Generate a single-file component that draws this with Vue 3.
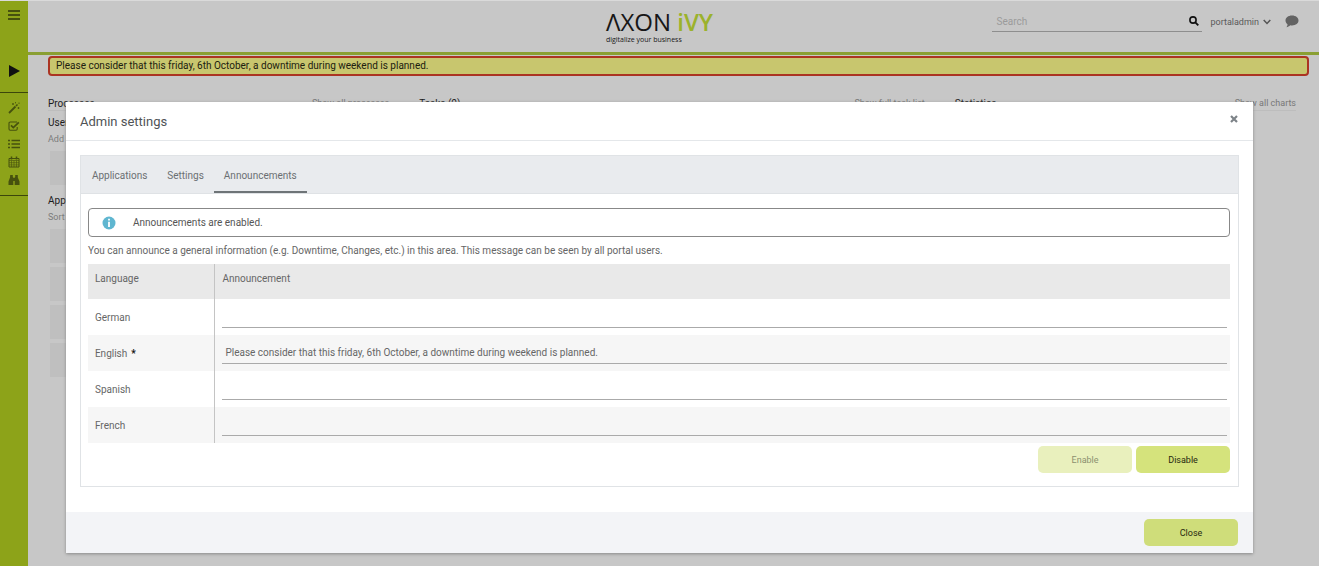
<script setup>
import { ref, reactive } from 'vue'

const notice = 'Please consider that this friday, 6th October, a downtime during weekend is planned.'
const tabs = ['Applications', 'Settings', 'Announcements']
const activeTab = ref('Announcements')
const search = ref('')
const languages = reactive([
  { name: 'German', text: '', required: false },
  { name: 'English', text: notice, required: true },
  { name: 'Spanish', text: '', required: false },
  { name: 'French', text: '', required: false }
])
</script>

<template>
  <div class="page">
    <nav class="sidebar">
      <button class="side-btn menu" aria-label="Menu">
        <svg width="12" height="10" viewBox="0 0 12 10"><path d="M0 1h12M0 5h12M0 9h12" stroke="currentColor" stroke-width="2" /></svg>
      </button>
      <button class="side-btn play" aria-label="Start">
        <svg width="11" height="12" viewBox="0 0 11 12"><path d="M0 0L11 6L0 12Z" fill="#111" /></svg>
      </button>
      <div class="side-group">
        <button class="side-btn" aria-label="Processes">
          <svg width="12" height="12" viewBox="0 0 12 12"><path d="M1 11L7.500 4.500" stroke="currentColor" stroke-width="1.800" /><path d="M8 4L9.500 2.500" stroke="currentColor" stroke-width="1.600" /><path d="M5 1v2M4 2h2M10.500 5v2M9.500 6h2M7.500 0v1.400M11 .5v1.500" stroke="currentColor" stroke-width=".8" /></svg>
        </button>
        <button class="side-btn" aria-label="Tasks">
          <svg width="12" height="12" viewBox="0 0 12 12" fill="none" stroke="currentColor"><path d="M9 2H2.200Q1 2 1 3.200V9Q1 10.200 2.200 10.200H8Q9.200 10.200 9.200 9V7" stroke-width="1.100" /><path d="M3 5.300L5.300 7.600L10.800 2.300" stroke-width="1.700" /></svg>
        </button>
        <button class="side-btn" aria-label="Cases">
          <svg width="12" height="10" viewBox="0 0 12 10"><path d="M0 1.500h2M0 5h2M0 8.500h2M3.500 1.500H12M3.500 5H12M3.500 8.500H12" stroke="currentColor" stroke-width="1.500" /></svg>
        </button>
        <button class="side-btn" aria-label="Calendar">
          <svg width="12" height="12" viewBox="0 0 12 12" fill="none" stroke="currentColor"><path d="M1 2.500H11V11H1Z" /><path d="M3.500 .5v3M8.500 .5v3" stroke-width="1.500" /><path d="M1 4.500h10M1 6.700h10M1 8.900h10M3.500 4.500V11M6 4.500V11M8.500 4.500V11" stroke-width=".6" /></svg>
        </button>
        <button class="side-btn" aria-label="Find">
          <svg width="12" height="12" viewBox="0 0 12 12" fill="currentColor"><path d="M2.200 1h2.600v2H5.300V11H0.500V7.500L2 3.500ZM7.200 1h2.600v2.500L11.500 7.500V11H6.700V3h.5ZM5 4h2v3H5Z" /></svg>
        </button>
      </div>
    </nav>

    <div class="main">
      <header class="topbar">
        <div class="logo">
          <div class="logo-name">ΛXON <b>iVY</b></div>
          <div class="logo-sub">digitalize your business</div>
        </div>
        <div class="tools">
          <div class="search">
            <input v-model="search" type="text" placeholder="Search" aria-label="Search" />
            <button class="plain" aria-label="Run search">
              <svg width="10" height="10" viewBox="0 0 10 10" fill="none" stroke="#111"><circle cx="4" cy="4" r="3.100" stroke-width="1.600" /><path d="M6.300 6.300L9.300 9.300" stroke-width="1.900" /></svg>
            </button>
          </div>
          <button class="plain user">portaladmin
            <svg width="8" height="6" viewBox="0 0 8 6" fill="none"><path d="M.7 1L4 4.500L7.300 1" stroke="#555" stroke-width="1.500" /></svg>
          </button>
          <button class="plain chat" aria-label="Chat">
            <svg width="14" height="13" viewBox="0 0 14 13"><path d="M7 .5C10.900 .5 13.500 2.700 13.500 5.500S10.900 10.400 7 10.400C6.400 10.400 5.800 10.300 5.300 10.200C4.200 11.300 2.800 12 1.300 12.200C2 11.500 2.500 10.500 2.500 9.200C1.200 8.300 .5 7 .5 5.500C.5 2.700 3.100 .5 7 .5Z" fill="#636363" /></svg>
          </button>
        </div>
      </header>

      <p class="banner">{{ notice }}</p>

      <div class="dashboard">
        <section>
          <div class="head"><h2>Processes</h2><a href="#">Show all processes</a></div>
          <h3>User</h3>
          <p class="hint">Add n</p>
          <div class="tile"></div>
          <h3 class="apps">App</h3>
          <p class="hint">Sort</p>
          <div v-for="n in 4" :key="n" class="tile"></div>
        </section>
        <section>
          <div class="head"><h2>Tasks (0)</h2><a href="#">Show full task list</a></div>
        </section>
        <section>
          <div class="head"><h2>Statistics</h2><a href="#">Show all charts</a></div>
        </section>
      </div>
    </div>

    <div class="dialog" role="dialog" aria-labelledby="dialog-title">
      <div class="dialog-head">
        <h1 id="dialog-title">Admin settings</h1>
        <button class="plain" aria-label="Close dialog">
          <svg width="8" height="8" viewBox="0 0 8 8"><path d="M1 1L7 7M7 1L1 7" stroke="#7d8388" stroke-width="2.200" /></svg>
        </button>
      </div>

      <div class="dialog-body">
        <div class="tabview">
          <div class="tabs" role="tablist">
            <button
              v-for="tab in tabs"
              :key="tab"
              role="tab"
              :aria-selected="tab === activeTab"
              :class="{ active: tab === activeTab }"
              @click="activeTab = tab"
            >{{ tab }}</button>
          </div>
          <div class="panel">
            <div class="message">
              <svg width="14" height="14" viewBox="0 0 14 14"><circle cx="7" cy="7" r="6.500" fill="#5fb6d0" /><path d="M7 2.800V4.600M7 5.800V11" stroke="#fff" stroke-width="1.800" /></svg>
              <span>Announcements are enabled.</span>
            </div>
            <p class="description">You can announce a general information (e.g. Downtime, Changes, etc.) in this area. This message can be seen by all portal users.</p>
            <table>
              <thead>
                <tr><th class="lang">Language</th><th>Announcement</th></tr>
              </thead>
              <tbody>
                <tr v-for="row in languages" :key="row.name">
                  <td class="lang"><label :for="'text-' + row.name">{{ row.name }}<b v-if="row.required">*</b></label></td>
                  <td><input :id="'text-' + row.name" v-model="row.text" type="text" /></td>
                </tr>
              </tbody>
            </table>
            <div class="actions">
              <button class="btn" disabled>Enable</button>
              <button class="btn">Disable</button>
            </div>
          </div>
        </div>
      </div>

      <footer class="dialog-foot"><button class="btn close">Close</button></footer>
    </div>
  </div>
</template>

<style>
body { margin: 0; background: #c7c7c7; }
</style>

<style scoped>
* { box-sizing: border-box; }
.page {
  position: relative;
  display: flex;
  min-height: 100vh;
  overflow: hidden;
  background: #c7c7c7;
  border-top: 1px solid #dadada;
  font-family: Roboto, "Liberation Sans", sans-serif;
  font-size: 10px;
  color: #222;
}
h1, h2, h3, p { margin: 0; font-weight: 400; }
button, input { font-family: inherit; }
button { border: 0; padding: 0; cursor: pointer; }
svg { display: block; }
.plain { background: none; }

.sidebar { flex: none; width: 28px; background: #8da319; color: #46510e; }
.side-btn { display: flex; align-items: center; justify-content: center; width: 100%; height: 18px; background: none; color: inherit; }
.menu { height: 27px; }
.play { height: 64px; padding-top: 22px; }
.side-group { padding: 6px 0; border-top: 1px solid #3c460b; border-bottom: 1px solid #3c460b; }

.main { flex: 1; min-width: 0; }
.topbar { position: relative; display: flex; justify-content: center; height: 54px; border-bottom: 3px solid #8a9f33; }
.logo { margin-right: 28px; padding-top: 7px; font-family: "Open Sans", sans-serif; color: #171717; }
.logo-name { font-size: 24px; line-height: 28px; }
.logo-name b { color: #9bb22c; font-weight: 600; }
.logo-sub { font-size: 7px; line-height: 8px; }
.tools { position: absolute; top: 10px; right: 20px; display: flex; align-items: center; }
.search { display: flex; align-items: center; width: 210px; height: 21px; padding: 0 3px; border-bottom: 1px solid #8e8e8e; }
.search input { flex: 1; min-width: 0; padding: 0 1px; border: 0; background: none; outline: 0; font-size: 10px; }
.search input::placeholder { color: #9b9b9b; opacity: 1; }
.user { display: flex; align-items: center; gap: 4px; margin: 0 14px 0 8px; font-size: 9px; color: #5a5a5a; }

.banner { margin: 1px 10px 0 20px; padding: 0 6px; border: 2px solid #ab3422; border-radius: 4px; background: #c8c66e; font-size: 10px; line-height: 16px; color: #20200f; }

.dashboard { display: grid; grid-template-columns: 27fr 40fr 27fr; gap: 30px; margin: 20px 23px 0 20px; }
.head { display: flex; justify-content: space-between; align-items: center; height: 15px; border-bottom: 1px solid #bdbdbd; }
.head h2, h3 { font-size: 10px; color: #1c1c1c; }
.head a { font-size: 9px; color: #777; text-decoration: none; }
h3 { margin-top: 4px; line-height: 16px; }
.hint { line-height: 16px; color: #7c7c7c; font-size: 9px; }
.tile { height: 34px; margin: 4px 0 0 2px; background: #bfbfbf; }
.apps { margin-top: 8px; }

.dialog { position: absolute; top: 101px; left: 5%; right: 5%; background: #fff; box-shadow: 0 1px 3px #888; color: #666; }
.dialog-head { display: flex; justify-content: space-between; height: 39px; padding: 0 15px 0 14px; border-bottom: 1px solid #e4e7ea; }
.dialog-head h1 { font-size: 13px; line-height: 40px; color: #4f5356; }
.dialog-head button { align-self: flex-start; margin-top: 13px; }
.dialog-body { padding: 14px 14px 25px; }
.tabview { border: 1px solid #e0e3e6; }
.tabs { display: flex; height: 38px; padding: 0 1px; background: #e9ebee; border-bottom: 1px solid #dfe2e5; }
.tabs button { padding: 3px 10px 0; border-bottom: 2px solid transparent; background: none; font-size: 10px; color: #6b6f72; }
.tabs button.active { border-color: #6e7477; }
.panel { padding: 14px 8px 13px 7px; }
.message { display: flex; align-items: center; gap: 17px; height: 29px; padding: 0 13px; border: 1px solid #888; border-radius: 4px; font-size: 10px; color: #555; }
.description { font-size: 10px; line-height: 27px; color: #666; }
table { width: 100%; border-collapse: collapse; table-layout: fixed; font-size: 10px; }
th { height: 35px; padding: 0 7px 6px; background: #e9e9e9; text-align: left; font-weight: 400; }
.lang { width: 127px; padding-left: 7px; border-right: 1px solid #c4c4c4; }
td { height: 36px; padding: 0 3px 0 7px; }
tbody tr:nth-child(even) { background: #f6f6f6; }
td b { margin-left: 4px; color: #111; }
td input { display: block; width: 100%; height: 21px; padding: 0 3px; border: 0; border-bottom: 1px solid #aaa; background: none; outline: 0; font-size: 10px; color: #666; }
.actions { display: flex; justify-content: flex-end; gap: 4px; padding-top: 3px; }
.btn { width: 94px; height: 27px; border-radius: 5px; background: #d5e37c; font-size: 9px; color: #26290f; }
.btn:disabled { background: #e9f0bd; color: #8b9170; }
.close { background: #cfdd7a; }
.dialog-foot { display: flex; justify-content: flex-end; padding: 7px 15px; background: #f3f4f7; }
</style>
